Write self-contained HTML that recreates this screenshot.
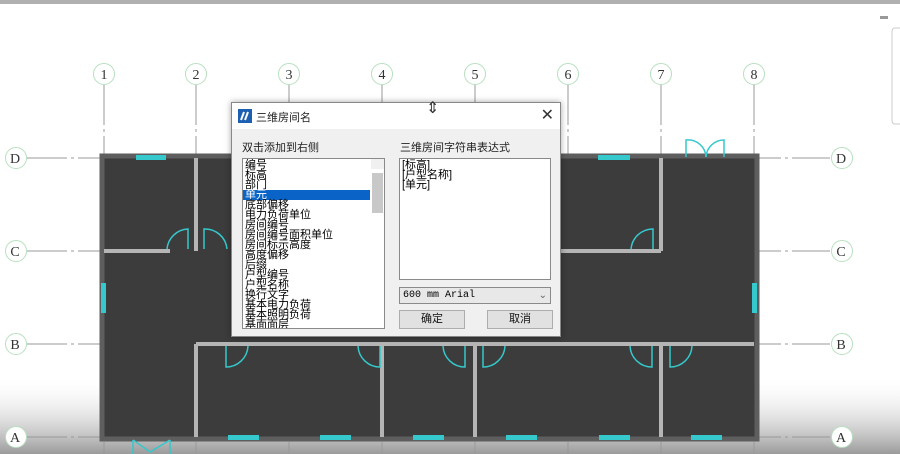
<!DOCTYPE html>
<html><head><meta charset="utf-8"><style>
*{margin:0;padding:0;box-sizing:border-box}
body{width:900px;height:454px;overflow:hidden;background:#fff;position:relative;font-family:"Liberation Sans","Noto Sans CJK SC",sans-serif}
#bg{position:absolute;left:0;top:0}
.dlg{position:absolute;left:231px;top:102px;width:330px;height:235px;background:#f0f0f0;border:1px solid #888;box-shadow:0 0 6px rgba(0,0,0,.35)}
.tb{height:26px;background:#fff;position:relative}
.tb .t{position:absolute;left:24px;top:6px;font-size:11px;color:#222}
.tb .x{position:absolute;right:6px;top:2px;font-size:16px;color:#333}
.lbl{position:absolute;font-size:11px;color:#222}
.box{position:absolute;background:#fff;border:1px solid #8a8a8a;overflow:hidden}
.list div{font-size:11px;line-height:10px;height:10px;color:#000;padding-left:2px;white-space:nowrap}
.sb{position:absolute;right:0;top:0;width:13px;height:100%;background:#f0f0f0}
.btn{position:absolute;top:207px;width:66px;height:19px;background:#e1e1e1;border:1px solid #adadad;font-size:11px;text-align:center;line-height:17px;color:#111}
</style></head><body>
<svg id="bg" width="900" height="454" viewBox="0 0 900 454">
<defs><linearGradient id="g" x1="0" y1="0" x2="0" y2="1"><stop offset="0" stop-color="#fff" stop-opacity="0"/><stop offset="1" stop-color="#9a9a9a"/></linearGradient></defs>
<rect x="0" y="0" width="900" height="4" fill="#b0b0b0"/>
<rect x="0" y="375" width="900" height="79" fill="url(#g)"/>
<g stroke="#999" stroke-width="1" stroke-dasharray="40 4 3 4">
<line x1="104" y1="85" x2="104" y2="454"/><line x1="196" y1="85" x2="196" y2="454"/><line x1="289" y1="85" x2="289" y2="454"/><line x1="382" y1="85" x2="382" y2="454"/><line x1="475" y1="85" x2="475" y2="454"/><line x1="568" y1="85" x2="568" y2="454"/><line x1="661" y1="85" x2="661" y2="454"/><line x1="754" y1="85" x2="754" y2="454"/>
<line x1="27" y1="158" x2="830" y2="158"/><line x1="27" y1="251" x2="830" y2="251"/><line x1="27" y1="344" x2="830" y2="344"/><line x1="27" y1="437" x2="830" y2="437"/>
</g>
<g fill="#fff" stroke="#b8e0c0" stroke-width="1">
<circle cx="104" cy="74" r="10.5"/><circle cx="196" cy="74" r="10.5"/><circle cx="289" cy="74" r="10.5"/><circle cx="382" cy="74" r="10.5"/><circle cx="475" cy="74" r="10.5"/><circle cx="568" cy="74" r="10.5"/><circle cx="661" cy="74" r="10.5"/><circle cx="754" cy="74" r="10.5"/>
<circle cx="16" cy="158" r="10.5"/><circle cx="16" cy="251" r="10.5"/><circle cx="16" cy="344" r="10.5"/><circle cx="16" cy="437" r="10.5"/>
<circle cx="842" cy="158" r="10.5"/><circle cx="842" cy="251" r="10.5"/><circle cx="842" cy="344" r="10.5"/><circle cx="842" cy="437" r="10.5"/>
</g>
<g font-family="Liberation Serif" font-size="14" text-anchor="middle" fill="#333">
<text x="104" y="79">1</text><text x="196" y="79">2</text><text x="289" y="79">3</text><text x="382" y="79">4</text><text x="475" y="79">5</text><text x="568" y="79">6</text><text x="661" y="79">7</text><text x="754" y="79">8</text>
<text x="15" y="163">D</text><text x="15" y="256">C</text><text x="15" y="349">B</text><text x="15" y="442">A</text>
<text x="841" y="163">D</text><text x="841" y="256">C</text><text x="841" y="349">B</text><text x="841" y="442">A</text>
</g>
<rect x="102" y="156" width="655" height="283" fill="#3c3c3c" stroke="#5e5e5e" stroke-width="5"/>
<g stroke="#b5b5b5" stroke-width="4">
<line x1="104" y1="251" x2="170" y2="251"/><line x1="196" y1="158" x2="196" y2="251"/><line x1="560" y1="251" x2="661" y2="251"/><line x1="661" y1="158" x2="661" y2="251"/>
<line x1="196" y1="344" x2="754" y2="344"/><line x1="196" y1="344" x2="196" y2="437"/><line x1="382" y1="344" x2="382" y2="437"/><line x1="475" y1="344" x2="475" y2="437"/><line x1="661" y1="344" x2="661" y2="437"/>
</g>
<g fill="#35c8cc">
<rect x="136" y="155" width="30" height="5"/><rect x="598" y="155" width="32" height="5"/>
<rect x="101" y="283" width="5" height="30"/><rect x="752" y="283" width="5" height="30"/>
<rect x="228" y="435" width="31" height="5"/><rect x="320" y="435" width="31" height="5"/><rect x="413" y="435" width="31" height="5"/><rect x="506" y="435" width="31" height="5"/><rect x="599" y="435" width="31" height="5"/><rect x="691" y="435" width="31" height="5"/>
</g>
<g fill="none" stroke="#35c8cc" stroke-width="1.5">
<path d="M188 249V229A22 22 0 0 0 167 249"/><path d="M204 249V229A22 22 0 0 1 227 249"/>
<path d="M653 249V229A22 22 0 0 0 631 249"/>
<path d="M686 157V140A18 18 0 0 1 706 157"/><path d="M724 157V140A18 18 0 0 0 706 157"/>
<path d="M226 346V367A22 22 0 0 0 248 346"/><path d="M380 346V367A22 22 0 0 1 358 346"/>
<path d="M465 346V367A22 22 0 0 1 443 346"/><path d="M483 346V367A22 22 0 0 0 505 346"/>
<path d="M652 346V367A22 22 0 0 1 630 346"/><path d="M670 346V367A22 22 0 0 0 692 346"/>
<path d="M133 454V440M170 454V440M133 440L150 452L170 440"/>
</g>
<rect x="880" y="16" width="8" height="3" fill="#999"/>
<rect x="892" y="28" width="12" height="96" rx="3" fill="#fff" stroke="#ccc"/>
</svg>
<div class="dlg">
<div class="tb"><svg style="position:absolute;left:6px;top:6px" width="14" height="14"><rect width="14" height="14" fill="#1d5fb0"/><path d="M3 11L6 3M7 11L10 3" stroke="#fff" stroke-width="2"/></svg><span class="t">三维房间名</span><span class="x">✕</span></div>
<div class="lbl" style="left:10px;top:36px">双击添加到右侧</div>
<div class="lbl" style="left:168px;top:36px">三维房间字符串表达式</div>
<div class="box list" style="left:10px;top:55px;width:143px;height:171px;padding-top:1px">
<div>编号</div><div>标高</div><div>部门</div><div style="background:#0a64c8;color:#fff;margin-right:14px">单元</div><div>底部偏移</div><div>电力负荷单位</div><div>房间编号</div><div>房间编号面积单位</div><div>房间标示高度</div><div>高度偏移</div><div>后缀</div><div>户型编号</div><div>户型名称</div><div>换行文字</div><div>基本电力负荷</div><div>基本照明负荷</div><div>基面面层</div>
<div class="sb"><div style="position:absolute;top:14px;left:1px;width:11px;height:40px;background:#c8c8c8"></div></div>
</div>
<div class="box list" style="left:167px;top:55px;width:152px;height:122px;padding-top:1px">
<div>[标高]</div><div>[户型名称]</div><div>[单元]</div>
<div class="sb" style="background:#fff"></div>
</div>
<div class="box" style="left:167px;top:184px;width:152px;height:17px;background:#e8e8e8;font-family:'Liberation Mono',monospace;font-size:10px;line-height:15px;padding-left:3px">600 mm Arial<span style="position:absolute;right:3px;top:0;font-family:'Liberation Sans';color:#666">⌄</span></div>
<div class="btn" style="left:167px">确定</div>
<div class="btn" style="left:255px">取消</div>
</div>
<div style="position:absolute;left:426px;top:98px;font-size:16px;color:#333">⇕</div>
</body></html>
